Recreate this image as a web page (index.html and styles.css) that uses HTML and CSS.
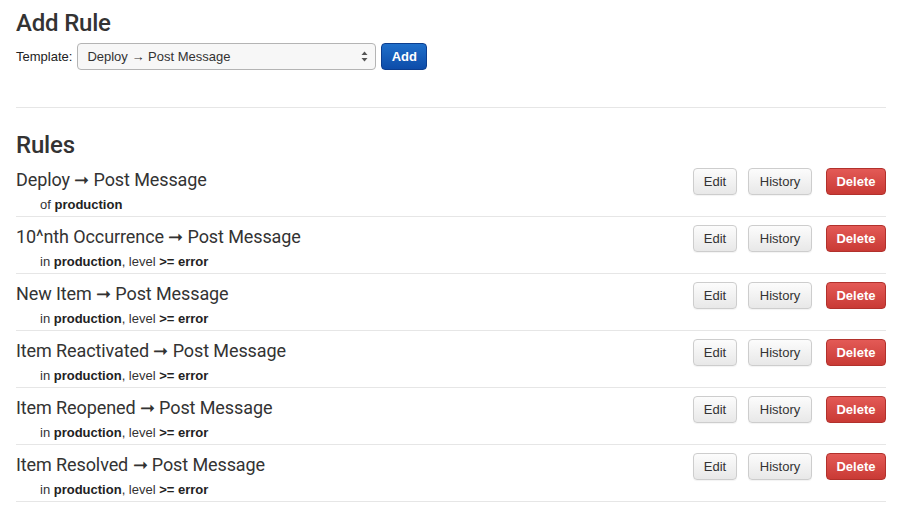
FILE: index.html
```html
<!DOCTYPE html>
<html>
<head>
<meta charset="utf-8">
<link rel="stylesheet" href="styles.css">
</head>
<body>
<div class="page">
  <h2 class="heading add-heading">Add Rule</h2>
  <form class="add-form">
    <label class="label">Template:</label>
    <div class="select">
      <span class="select-text">Deploy → Post Message</span>
      <svg class="select-arrows" width="7" height="11" viewBox="0 0 7 11"><path d="M3.5 0.5 L6.5 4 L0.5 4 Z" fill="#555"/><path d="M3.5 10.5 L6.5 7 L0.5 7 Z" fill="#555"/></svg>
    </div>
    <button type="button" class="btn btn-primary">Add</button>
  </form>
  <hr class="divider">
  <h2 class="heading rules-heading">Rules</h2>
  <ul class="rules">
    <li class="rule">
      <div class="rule-info">
        <div class="rule-title">Deploy ➞ Post Message</div>
        <div class="rule-sub">of <b>production</b></div>
      </div>
      <div class="actions"><button class="btn btn-edit">Edit</button><button class="btn btn-history">History</button><button class="btn btn-danger">Delete</button></div>
    </li>
    <li class="rule">
      <div class="rule-info">
        <div class="rule-title">10^nth Occurrence ➞ Post Message</div>
        <div class="rule-sub">in <b>production</b>, level <b>&gt;= error</b></div>
      </div>
      <div class="actions"><button class="btn btn-edit">Edit</button><button class="btn btn-history">History</button><button class="btn btn-danger">Delete</button></div>
    </li>
    <li class="rule">
      <div class="rule-info">
        <div class="rule-title">New Item ➞ Post Message</div>
        <div class="rule-sub">in <b>production</b>, level <b>&gt;= error</b></div>
      </div>
      <div class="actions"><button class="btn btn-edit">Edit</button><button class="btn btn-history">History</button><button class="btn btn-danger">Delete</button></div>
    </li>
    <li class="rule">
      <div class="rule-info">
        <div class="rule-title">Item Reactivated ➞ Post Message</div>
        <div class="rule-sub">in <b>production</b>, level <b>&gt;= error</b></div>
      </div>
      <div class="actions"><button class="btn btn-edit">Edit</button><button class="btn btn-history">History</button><button class="btn btn-danger">Delete</button></div>
    </li>
    <li class="rule">
      <div class="rule-info">
        <div class="rule-title">Item Reopened ➞ Post Message</div>
        <div class="rule-sub">in <b>production</b>, level <b>&gt;= error</b></div>
      </div>
      <div class="actions"><button class="btn btn-edit">Edit</button><button class="btn btn-history">History</button><button class="btn btn-danger">Delete</button></div>
    </li>
    <li class="rule">
      <div class="rule-info">
        <div class="rule-title">Item Resolved ➞ Post Message</div>
        <div class="rule-sub">in <b>production</b>, level <b>&gt;= error</b></div>
      </div>
      <div class="actions"><button class="btn btn-edit">Edit</button><button class="btn btn-history">History</button><button class="btn btn-danger">Delete</button></div>
    </li>
  </ul>
</div>
</body>
</html>
```
FILE: styles.css
```css
html, body {
  margin: 0;
  padding: 0;
  background: #fff;
}
body {
  font-family: "Liberation Sans", Arial, sans-serif;
  font-size: 13px;
  color: #333;
}
.page {
  padding: 0 11px 0 16px;
}
.heading {
  font-family: Roboto, "Noto Sans", sans-serif;
  font-weight: 500;
  font-size: 24px;
  color: #333;
  margin: 0;
  letter-spacing: -0.2px;
}
.add-heading {
  line-height: 30px;
  padding-top: 8px;
}
.add-form {
  display: flex;
  align-items: center;
  margin-top: 5px;
  height: 27px;
}
.label {
  font-size: 13px;
  color: #222;
  margin-right: 5px;
}
.select {
  box-sizing: border-box;
  width: 299px;
  height: 27px;
  border: 1px solid #b4b4b4;
  border-radius: 4px;
  background: #f7f7f7;
  display: flex;
  align-items: center;
  padding: 0 7px 0 9px;
}
.select-text {
  flex: 1;
  font-size: 13px;
  color: #333;
}
.select-arrows {
  display: block;
}
.btn {
  box-sizing: border-box;
  height: 27px;
  font-family: "Liberation Sans", Arial, sans-serif;
  font-size: 13px;
  border-radius: 4px;
  padding: 0;
  cursor: pointer;
}
.btn-primary {
  margin-left: 5px;
  width: 46px;
  color: #fff;
  font-weight: bold;
  border: 1px solid #0c3e8f;
  background: linear-gradient(#1f6fca, #0d4ca9);
}
.divider {
  border: 0;
  border-top: 1px solid #e6e6e6;
  margin: 37px 0 0 0;
  height: 0;
}
.rules-heading {
  line-height: 30px;
  margin-top: 22px;
}
.rules {
  list-style: none;
  margin: 0;
  padding: 0;
}
.rule {
  display: flex;
  align-items: flex-start;
  height: 56px;
  border-bottom: 1px solid #e6e6e6;
}
.rule-info {
  flex: 1;
}
.rule-title {
  font-family: Roboto, "Noto Sans", sans-serif;
  font-size: 18px;
  color: #333;
  line-height: 22px;
  margin-top: 9px;
  letter-spacing: -0.1px;
}
.rule-sub {
  font-size: 13px;
  color: #333;
  line-height: 16px;
  margin-top: 6px;
  padding-left: 24px;
}
.rule-sub b {
  color: #222;
}
.actions {
  display: flex;
  margin-top: 8px;
}
.btn-edit, .btn-history {
  color: #333;
  border: 1px solid #cdcdcd;
  background: linear-gradient(#fcfcfc, #e8e8e8);
  box-shadow: 0 1px 1px rgba(0,0,0,0.05);
}
.btn-edit {
  width: 44px;
}
.btn-history {
  width: 64px;
  margin-left: 11px;
}
.btn-danger {
  width: 60px;
  margin-left: 14px;
  color: #fff;
  font-weight: bold;
  border: 1px solid #b2312c;
  background: linear-gradient(#e35a56, #c93a35);
}
```
